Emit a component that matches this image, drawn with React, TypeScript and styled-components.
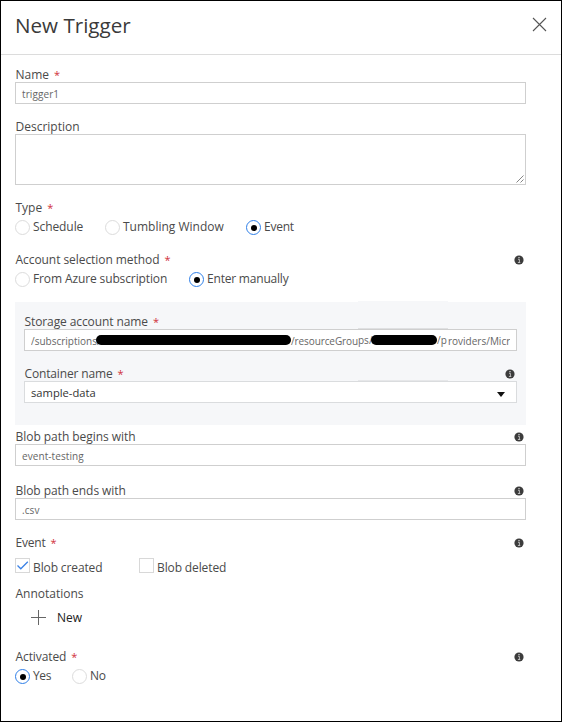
import React from 'react';
import styled, { createGlobalStyle } from 'styled-components';

const GlobalStyle = createGlobalStyle`
  *, *::before, *::after { box-sizing: border-box; }
  body { margin: 0; background: #fff; }
`;

const Dialog = styled.main`
  width: 562px;
  height: 722px;
  border: 1px solid #000;
  background: #fff;
  color: #4a4a4a;
  font: 12px/18px 'Open Sans', 'Noto Sans', sans-serif;
  overflow: hidden;
  white-space: nowrap;
`;

const Header = styled.header`
  display: flex;
  align-items: center;
  justify-content: space-between;
  height: 54px;
  padding: 0 14px 7px 14px;
  border-bottom: 1px solid #dcdcdc;
`;

const Title = styled.h1`
  margin: 0;
  padding-top: 2px;
  color: #3a3a3a;
  font-size: 20.6px;
  font-weight: 400;
  line-height: 30px;
`;

const IconButton = styled.button`
  display: flex;
  margin: 0;
  padding: 0;
  border: 0;
  background: none;
`;

const Form = styled.form`
  display: flex;
  flex-direction: column;
  width: 525px;
  padding: 11px 0 0 14px;
`;

const Field = styled.div<{ $gap?: number }>`
  display: flex;
  flex-direction: column;
  margin-top: ${(p) => p.$gap ?? 0}px;
`;

const LabelRow = styled.div<{ $track?: number }>`
  display: flex;
  align-items: flex-start;
  justify-content: space-between;
  height: 16px;
  padding: 0 2px 0 0.5px;
  letter-spacing: ${(p) => p.$track ?? 0}px;

  svg {
    margin-top: 4px;
  }
`;

const Star = styled.span`
  margin-left: 5px;
  color: #d0303a;
  font-size: 11px;
`;

const TextBox = styled.div`
  display: flex;
  align-items: center;
  height: 22px;
  padding: 1px 6px 0;
  border: 1px solid #cfcfcf;
  background: #fff;
  color: #666;
  font-size: 10px;
  letter-spacing: 0.08px;
  overflow: hidden;
`;

const TextArea = styled.div`
  display: flex;
  align-items: flex-end;
  justify-content: flex-end;
  height: 51px;
  padding: 0 1px 1px 0;
  border: 1px solid #cfcfcf;
`;

const PathClip = styled.div`
  display: flex;
  align-items: center;
  width: 481px;
  overflow: hidden;
  letter-spacing: 0;
`;

const Segment = styled.span<{ $width: number; $raised?: boolean; $track?: number }>`
  flex: none;
  width: ${(p) => p.$width}px;
  padding-bottom: ${(p) => (p.$raised ? 2 : 0)}px;
  letter-spacing: ${(p) => p.$track ?? 0}px;
`;

const Redaction = styled.span<{ $width: number }>`
  position: relative;
  flex: none;
  width: ${(p) => p.$width}px;
  height: 10px;
  margin-bottom: 1px;
  border-radius: 5px;
  background: #000;
`;

const Select = styled(TextBox)`
  justify-content: space-between;
  padding: 2px 11px 0 6px;
  border-color: #dadcde;
  color: #333;
  font-size: 11.2px;
  letter-spacing: 0;
`;

const Caret = styled.i`
  margin-top: 3px;
  border: 4.5px solid transparent;
  border-top: 5px solid #111;
  border-bottom: 0;
`;

const Panel = styled.section`
  position: relative;
  height: 123px;
  margin-top: 16px;
  padding: 11px 9px 0;
  background: #f6f7f9;
`;

const Seam = styled.i<{ $top: number; $color: string }>`
  position: absolute;
  top: ${(p) => p.$top}px;
  left: 343px;
  width: 90px;
  height: 1px;
  background: ${(p) => p.$color};
`;

const Choices = styled.div<{ $gap?: number }>`
  display: flex;
  height: 16px;
  margin-top: ${(p) => p.$gap ?? 3}px;
`;

const Choice = styled.label<{ $width: number; $track?: number }>`
  display: flex;
  align-items: flex-start;
  gap: 3px;
  width: ${(p) => p.$width}px;
  letter-spacing: ${(p) => p.$track ?? 0}px;
`;

const Radio = styled.span<{ $on?: boolean }>`
  display: flex;
  align-items: center;
  justify-content: center;
  flex: none;
  width: 15px;
  height: 15px;
  margin-top: 2px;
  border: 1px solid ${(p) => (p.$on ? '#2f7fe8' : '#dcdcdc')};
  border-radius: 50%;
  background: #fff;

  &::after {
    content: '';
    width: 6px;
    height: 6px;
    border-radius: 50%;
    background: ${(p) => (p.$on ? '#000' : 'transparent')};
  }
`;

const Check = styled.span`
  display: flex;
  flex: none;
  width: 15px;
  height: 15px;
  margin-top: -1px;
  border: 1px solid #d8d8d8;
`;

const AddButton = styled.button`
  display: flex;
  align-items: center;
  gap: 11px;
  height: 16px;
  margin: 9px 0 0 16px;
  padding: 0;
  border: 0;
  background: none;
  color: #222;
  font: inherit;

  svg {
    margin-bottom: 1px;
  }
`;

const InfoIcon = () => (
  <svg width="10" height="10" viewBox="0 0 10 10">
    <circle cx="5" cy="5" r="4.6" fill="#3c3c3c" />
    <path d="M4 4.3h1.4v3.2M3.9 7.5h2.4" fill="none" stroke="#c4c4c4" strokeWidth=".9" />
    <rect x="4.3" y="2" width="1.4" height="1.2" fill="#c4c4c4" />
  </svg>
);

type LabelProps = { text: string; required?: boolean; info?: boolean; track?: number };

const Label = ({ text, required, info, track }: LabelProps) => (
  <LabelRow $track={track}>
    <span>
      {text}
      {required && <Star>*</Star>}
    </span>
    {info && <InfoIcon />}
  </LabelRow>
);

export default function App() {
  return (
    <>
      <GlobalStyle />
      <Dialog>
        <Header>
          <Title>New Trigger</Title>
          <IconButton aria-label="Close">
            <svg width="15" height="15" viewBox="0 0 15 15">
              <path d="M1 1l13 13M14 1L1 14" stroke="#555" strokeWidth="1.1" />
            </svg>
          </IconButton>
        </Header>

        <Form>
          <Field>
            <Label text="Name" required />
            <TextBox>trigger1</TextBox>
          </Field>

          <Field $gap={14}>
            <Label text="Description" />
            <TextArea>
              <svg width="8" height="8" viewBox="0 0 8 8">
                <path d="M.5 7.5l7-7M4.5 7.5l3-3" stroke="#777" strokeWidth=".9" />
              </svg>
            </TextArea>
          </Field>

          <Field $gap={14}>
            <Label text="Type" required />
            <Choices>
              <Choice $width={90} $track={-0.08}><Radio />Schedule</Choice>
              <Choice $width={141}><Radio />Tumbling Window</Choice>
              <Choice $width={60} $track={-0.25}><Radio $on />Event</Choice>
            </Choices>
          </Field>

          <Field $gap={17}>
            <Label text="Account selection method" required info track={-0.06} />
            <Choices>
              <Choice $width={174} $track={-0.12}><Radio />From Azure subscription</Choice>
              <Choice $width={120} $track={-0.2}><Radio $on />Enter manually</Choice>
            </Choices>
          </Field>

          <Panel>
            <Field>
              <Label text="Storage account name" required track={-0.1} />
              <TextBox>
                <PathClip>
                  <Segment $width={65}>/subscriptions/</Segment>
                  <Redaction $width={195} />
                  <Segment $width={67} $track={-0.1}>/resourceGrou</Segment>
                  <Segment $width={13} $raised>ps/</Segment>
                  <Redaction $width={66} />
                  <Segment $width={11} $raised>/p</Segment>
                  <Segment $width={64}>roviders/Micr</Segment>
                </PathClip>
              </TextBox>
            </Field>
            <Field $gap={14}>
              <Label text="Container name" required info track={-0.15} />
              <Select>sample-data<Caret /></Select>
            </Field>
            <Seam $top={-1} $color="#f6f7f9" />
            <Seam $top={26} $color="#dfe0e2" />
            <Seam $top={78} $color="#e6e7e9" />
          </Panel>

          <Field $gap={3}>
            <Label text="Blob path begins with" info track={-0.04} />
            <TextBox>event-testing</TextBox>
          </Field>

          <Field $gap={16}>
            <Label text="Blob path ends with" info track={-0.06} />
            <TextBox>.csv</TextBox>
          </Field>

          <Field $gap={14}>
            <Label text="Event" required info track={-0.2} />
            <Choices $gap={9}>
              <Choice $width={124} $track={-0.12}>
                <Check>
                  <svg width="13" height="13" viewBox="0 0 13 13">
                    <path d="M1.5 6.5l3.3 3.3L11.8 2.8" fill="none" stroke="#3b82e6" strokeWidth="1.3" />
                  </svg>
                </Check>
                Blob created
              </Choice>
              <Choice $width={100} $track={-0.12}><Check />Blob deleted</Choice>
            </Choices>
          </Field>

          <Field $gap={10}>
            <Label text="Annotations" />
            <AddButton type="button">
              <svg width="15" height="15" viewBox="0 0 15 15">
                <path d="M7.5 0v15M0 7.5h15" stroke="#666" />
              </svg>
              New
            </AddButton>
          </Field>

          <Field $gap={22}>
            <Label text="Activated" required info track={-0.1} />
            <Choices $gap={3}>
              <Choice $width={57} $track={-0.4}><Radio $on />Yes</Choice>
              <Choice $width={60} $track={-0.2}><Radio />No</Choice>
            </Choices>
          </Field>
        </Form>
      </Dialog>
    </>
  );
}
